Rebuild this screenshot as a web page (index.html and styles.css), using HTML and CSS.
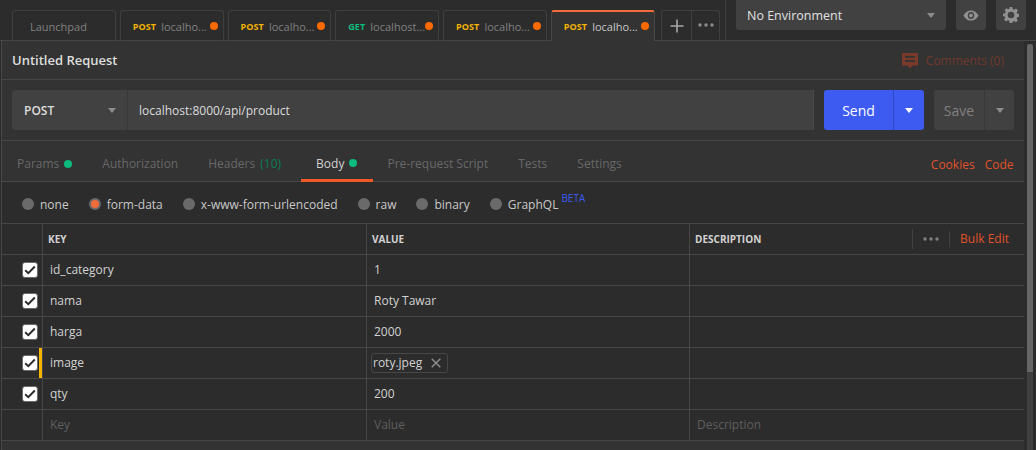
FILE: index.html
```html
<!DOCTYPE html>
<html lang="en">
<head>
<meta charset="utf-8">
<title>Untitled Request</title>
<link rel="stylesheet" href="styles.css">
</head>
<body>
<header class="topbar">
  <nav class="tabs">
    <div class="tab launch">Launchpad</div>
    <div class="tab"><span class="verb post">POST</span><span class="tab-url">localho...</span><i class="dot"></i></div>
    <div class="tab"><span class="verb post">POST</span><span class="tab-url">localho...</span><i class="dot"></i></div>
    <div class="tab"><span class="verb get">GET</span><span class="tab-url">localhost...</span><i class="dot"></i></div>
    <div class="tab"><span class="verb post">POST</span><span class="tab-url">localho...</span><i class="dot"></i></div>
    <div class="tab active"><span class="verb post">POST</span><span class="tab-url">localho...</span><i class="dot"></i></div>
    <div class="tab-actions">
      <div class="tab-plus"><svg width="14" height="14" viewBox="0 0 14 14"><path d="M7 0.5v13M0.5 7h13" stroke="#a8a8a8" stroke-width="1.6" fill="none"/></svg></div>
      <div class="tab-more"><svg width="16" height="4" viewBox="0 0 16 4"><circle cx="2" cy="2" r="1.7" fill="#8c8c8c"/><circle cx="8" cy="2" r="1.7" fill="#8c8c8c"/><circle cx="14" cy="2" r="1.7" fill="#8c8c8c"/></svg></div>
    </div>
  </nav>
  <div class="env">
    <div class="env-select"><span>No Environment</span><i class="caret"></i></div>
    <div class="icon-btn"><svg width="16" height="11" viewBox="0 0 22 14" preserveAspectRatio="none"><path fill="#909090" fill-rule="evenodd" d="M11 .5C6 .5 2.400 3.800 .6 7 2.400 10.200 6 13.500 11 13.500S19.600 10.200 21.400 7C19.600 3.800 16 .5 11 .5ZM11 2.600A4.400 4.400 0 1 1 11 11.400 4.400 4.400 0 0 1 11 2.600Z"/><circle cx="11" cy="7" r="2.600" fill="#909090"/></svg></div>
    <div class="icon-btn"><svg width="16" height="16" viewBox="0 0 24 24"><path fill="#909090" fill-rule="evenodd" d="M10 0h4l.7 3.300 2 .8L19.500 2.300l2.800 2.800-1.800 2.800.8 2 3.300.7v4l-3.300.7-.8 2 1.800 2.800-2.800 2.800-2.800-1.800-2 .8L14 24h-4l-.7-3.300-2-.8-2.800 1.800-2.800-2.800 1.800-2.800-.8-2L0 14v-4l3.300-.7.8-2L2.300 4.500 5.100 1.700 7.900 3.500l2-.8ZM12 7a5 5 0 1 0 0 10 5 5 0 0 0 0-10Z"/></svg></div>
  </div>
</header>

<main class="panel">
  <div class="title-row">
    <h1 class="title">Untitled Request</h1>
    <div class="comments">
      <svg width="16" height="16" viewBox="0 0 16 16"><path fill="#7a3a2b" fill-rule="evenodd" d="M0 0h16v12.500h-5.500L8 15.500 5.500 12.500H0ZM3 3v1.800h10V3ZM3 7v1.800h10V7Z"/></svg>
      <span>Comments (0)</span>
    </div>
  </div>

  <div class="url-row">
    <div class="url-group">
      <div class="method"><span>POST</span><i class="caret"></i></div>
      <div class="url">localhost:8000/api/product</div>
    </div>
    <div class="send"><span class="send-label">Send</span><span class="send-drop"><i class="caret white"></i></span></div>
    <div class="save"><span class="save-label">Save</span><span class="save-drop"><i class="caret"></i></span></div>
  </div>

  <div class="req-tabs">
    <div class="req-tab">Params<i class="green"></i></div>
    <div class="req-tab">Authorization</div>
    <div class="req-tab headers-tab">Headers <b class="count">(10)</b></div>
    <div class="req-tab current">Body<i class="green"></i></div>
    <div class="req-tab">Pre-request Script</div>
    <div class="req-tab">Tests</div>
    <div class="req-tab">Settings</div>
    <div class="req-links"><span>Cookies</span><span>Code</span></div>
  </div>

  <div class="body-types">
    <label class="radio"><i class="ring"></i>none</label>
    <label class="radio"><i class="ring on"></i>form-data</label>
    <label class="radio"><i class="ring"></i>x-www-form-urlencoded</label>
    <label class="radio"><i class="ring"></i>raw</label>
    <label class="radio"><i class="ring"></i>binary</label>
    <label class="radio"><i class="ring"></i>GraphQL<sup class="beta">BETA</sup></label>
  </div>

  <div class="grid">
    <div class="row head">
      <div class="cell check"></div>
      <div class="cell">KEY</div>
      <div class="cell">VALUE</div>
      <div class="cell desc-head">
        <span>DESCRIPTION</span>
        <div class="head-tools">
          <div class="head-more"><svg width="16" height="4" viewBox="0 0 16 4"><circle cx="2" cy="2" r="1.700" fill="#808080"/><circle cx="8" cy="2" r="1.700" fill="#808080"/><circle cx="14" cy="2" r="1.700" fill="#808080"/></svg></div>
          <span class="bulk">Bulk Edit</span>
        </div>
      </div>
    </div>
    <div class="row">
      <div class="cell check"><i class="box"><svg width="12" height="10" viewBox="0 0 12 10"><path d="M1.200 5.300 4.300 8.200 10.800 1.500" stroke="#2c2c2c" stroke-width="2" fill="none"/></svg></i></div>
      <div class="cell">id_category</div><div class="cell">1</div><div class="cell"></div>
    </div>
    <div class="row">
      <div class="cell check"><i class="box"><svg width="12" height="10" viewBox="0 0 12 10"><path d="M1.200 5.300 4.300 8.200 10.800 1.500" stroke="#2c2c2c" stroke-width="2" fill="none"/></svg></i></div>
      <div class="cell">nama</div><div class="cell">Roty Tawar</div><div class="cell"></div>
    </div>
    <div class="row">
      <div class="cell check"><i class="box"><svg width="12" height="10" viewBox="0 0 12 10"><path d="M1.200 5.300 4.300 8.200 10.800 1.500" stroke="#2c2c2c" stroke-width="2" fill="none"/></svg></i></div>
      <div class="cell">harga</div><div class="cell">2000</div><div class="cell"></div>
    </div>
    <div class="row">
      <div class="cell check flagged"><i class="box"><svg width="12" height="10" viewBox="0 0 12 10"><path d="M1.200 5.300 4.300 8.200 10.800 1.500" stroke="#2c2c2c" stroke-width="2" fill="none"/></svg></i></div>
      <div class="cell">image</div>
      <div class="cell file-cell"><span class="file">roty.jpeg<svg width="10" height="10" viewBox="0 0 10 10"><path d="M.7.7l8.600 8.600M9.300.7.7 9.300" stroke="#8c8c8c" stroke-width="1.500" fill="none"/></svg></span></div>
      <div class="cell"></div>
    </div>
    <div class="row">
      <div class="cell check"><i class="box"><svg width="12" height="10" viewBox="0 0 12 10"><path d="M1.200 5.300 4.300 8.200 10.800 1.500" stroke="#2c2c2c" stroke-width="2" fill="none"/></svg></i></div>
      <div class="cell">qty</div><div class="cell">200</div><div class="cell"></div>
    </div>
    <div class="row ghost">
      <div class="cell check"></div>
      <div class="cell">Key</div><div class="cell">Value</div><div class="cell">Description</div>
    </div>
  </div>
  <div class="scrollbar"><div class="thumb"></div></div>
</main>
</body>
</html>
```

FILE: styles.css
```css
* { box-sizing: border-box; }
html, body { margin: 0; height: 100%; overflow: hidden; }
body {
  width: 1036px;
  height: 450px;
  background: #2c2c2c;
  color: #dcdcdc;
  font-family: "Open Sans", "Liberation Sans", sans-serif;
  font-size: 12px;
}
i { display: block; font-style: normal; }

.topbar {
  height: 41px;
  display: flex;
  justify-content: space-between;
  border-bottom: 1px solid #474747;
  padding-left: 12px;
}
.tabs { display: flex; gap: 4px; height: 40px; padding-top: 10px; }
.tab {
  width: 103.75px;
  height: 31px;
  border: 1px solid #3f3f3f;
  border-bottom: 0;
  border-radius: 3px 3px 0 0;
  display: flex;
  align-items: center;
  padding: 0 0 0 12px;
  font-size: 11px;
  color: #808080;
  position: relative;
}
.launch { padding-left: 17px; }
.tab.active {
  height: 31px;
  background: #333333;
  border: 1px solid #474747;
  border-bottom: 0;
  border-top: 2px solid #f26b3a;
  color: #c8c8c8;
  position: relative;
  z-index: 1;
}
.verb { font-size: 9px; font-weight: 700; margin-right: 5px; letter-spacing: 0.1px; }
.post { color: #f4b400; }
.get { color: #0cbb7d; }
.dot {
  position: absolute;
  right: 5px;
  top: 11px;
  width: 8px;
  height: 8px;
  border-radius: 50%;
  background: #ff6a00;
}
.active .dot { top: 10px; }
.tab-actions {
  display: flex;
  margin-left: 2.500px;
  width: 59px;
  height: 30px;
  border: 1px solid #3f3f3f;
  border-bottom: 0;
  border-radius: 3px 3px 0 0;
}
.tab-plus {
  width: 30px;
  border-right: 1px solid #3f3f3f;
  display: flex;
  align-items: center;
  justify-content: center;
}
.tab-more { flex: 1; display: flex; align-items: center; justify-content: center; padding-bottom: 1px; }

.env {
  width: 301px;
  height: 40px;
  margin-right: 10px;
  border-left: 1px solid #3f3f3f;
  padding-left: 10px;
  display: flex;
  gap: 10px;
}
.env-select {
  width: 210px;
  height: 30px;
  background: #414141;
  border-radius: 0 0 3px 3px;
  display: flex;
  align-items: center;
  justify-content: space-between;
  padding: 0 11px;
  font-size: 12.500px;
  color: #e0e0e0;
}
.icon-btn {
  width: 30px;
  height: 30px;
  background: #414141;
  border-radius: 0 0 3px 3px;
  display: flex;
  align-items: center;
  justify-content: center;
}
.caret {
  width: 0;
  height: 0;
  border-left: 4px solid transparent;
  border-right: 4px solid transparent;
  border-top: 5px solid #8c8c8c;
}
.caret.white { border-top-color: #ffffff; }

.panel {
  position: relative;
  height: 409px;
  margin-left: 1px;
  width: 1023px;
  background: #333333;
  border-left: 1px solid #474747;
}
.title-row {
  height: 39px;
  display: flex;
  align-items: center;
  justify-content: space-between;
  padding: 0 20px 0 10px;
  border-bottom: 1px solid #474747;
}
.title { margin: 0; font-size: 13px; font-weight: 600; color: #dedede; }
.comments { display: flex; align-items: center; gap: 8px; color: #70392b; font-size: 12px; }
.comments svg { margin-top: 2px; }

.url-row { height: 61px; display: flex; align-items: flex-start; padding: 10px 10px 0; border-bottom: 1px solid #474747; }
.url-group { width: 802px; height: 40px; background: #414141; border-radius: 3px 0 0 3px; display: flex; }
.method {
  width: 116px;
  border-right: 1px solid #383838;
  display: flex;
  align-items: center;
  justify-content: space-between;
  padding: 1px 11px 0 12px;
  font-size: 12px;
  font-weight: 600;
  color: #dcdcdc;
}
.url { flex: 1; padding: 0 0 0 11px; display: flex; align-items: center; color: #dcdcdc; font-size: 12px; border-right: 1px solid #4a4a4a; }
.send {
  width: 100px;
  height: 40px;
  margin-left: 10px;
  background: #3d5af1;
  border-radius: 3px;
  display: flex;
  color: #ffffff;
  font-size: 14px;
  font-weight: 500;
}
.send-label { width: 69px; display: flex; align-items: center; justify-content: center; padding-top: 1px; }
.send-drop { flex: 1; border-left: 1px solid #3048c4; display: flex; align-items: center; justify-content: center; }
.save {
  width: 80px;
  height: 40px;
  margin-left: 10px;
  background: #414141;
  border-radius: 3px;
  display: flex;
  color: #808080;
  font-size: 14px;
  font-weight: 500;
}
.save-label { width: 50px; display: flex; align-items: center; justify-content: center; padding-top: 1px; }
.save-drop { flex: 1; border-left: 1px solid #383838; display: flex; align-items: center; justify-content: center; }

.req-tabs {
  height: 41px;
  display: flex;
  align-items: stretch;
  border-bottom: 1px solid #474747;
  color: #686868;
  font-size: 12px;
}
.req-tab { display: flex; align-items: center; padding: 5px 15px 0; white-space: nowrap; }
.req-tab .green { width: 8px; height: 8px; border-radius: 50%; background: #0cbb7d; margin-left: 5px; }
.headers-tab { white-space: pre; padding-right: 20px; }
.count { font-weight: 400; color: #0a7f56; margin-left: 2px; }
.req-tab.current { color: #d0d0d0; border-bottom: 3px solid #f05a28; padding: 6px 16px 0 15px; height: 41px; margin-right: -1px; }
.req-links { margin-left: auto; display: flex; align-items: center; gap: 10px; color: #e0522a; padding: 6px 10.500px 0 0; }

.body-types { height: 42px; background: #2c2c2c; display: flex; align-items: center; padding: 4px 0 0 20px; gap: 20px; color: #c8c8c8; font-size: 12px; border-bottom: 1px solid #474747; }
.radio { display: flex; align-items: center; gap: 6px; position: relative; white-space: nowrap; }
.ring { width: 12px; height: 12px; border-radius: 50%; background: #6a6a6a; margin-top: -2px; }
.ring.on { background: #f26b3a; border: 2px solid #6a6a6a; }
.beta { position: absolute; left: calc(100% + 3px); top: -4px; color: #3d5af1; font-size: 10px; line-height: 12px; }

.grid { background: #2c2c2c; }
.row { height: 31px; display: grid; grid-template-columns: 40px 324px 323px 335px; border-bottom: 1px solid #474747; }
.cell {
  border-left: 1px solid #474747;
  display: flex;
  align-items: center;
  padding: 0 0 1px 7px;
  color: #d2d2d2;
  font-size: 12px;
}
.cell.check { border-left: 0; padding-left: 20px; position: relative; }
.head .cell { font-size: 10px; font-weight: 700; color: #d2d2d2; padding: 0 0 1px 5px; }
.head .cell.check { padding-left: 20px; }
.box {
  width: 16px;
  height: 16px;
  background: #ffffff;
  border: 1px solid #6a6a6a;
  border-radius: 3px;
  display: flex;
  align-items: center;
  justify-content: center;
}
.flagged::after {
  content: "";
  position: absolute;
  right: 0;
  top: 0;
  width: 3px;
  height: 30px;
  background: #f4b400;
}
.file-cell { padding-left: 4px; }
.file {
  height: 20px;
  padding: 0 6px 0 1px;
  border: 1px solid #474747;
  border-radius: 3px;
  display: flex;
  align-items: center;
  gap: 9px;
}
.desc-head { justify-content: space-between; }
.head-tools { display: flex; align-items: center; height: 22px; }
.head-more { width: 37px; height: 20px; border-left: 1px solid #414141; display: flex; align-items: center; justify-content: center; }
.bulk { height: 16px; line-height: 16px; border-left: 1px solid #414141; font-size: 12px; font-weight: 400; color: #e0522a; padding: 0 15px 0 10px; margin-top: 1px; }
.ghost .cell { color: #5e5e5e; }

.scrollbar { position: absolute; left: 1025px; top: 3px; bottom: 0; width: 6px; background: #3f3f3f; }
.thumb { height: 328px; background: #666666; border-radius: 3px 3px 0 0; }
```
